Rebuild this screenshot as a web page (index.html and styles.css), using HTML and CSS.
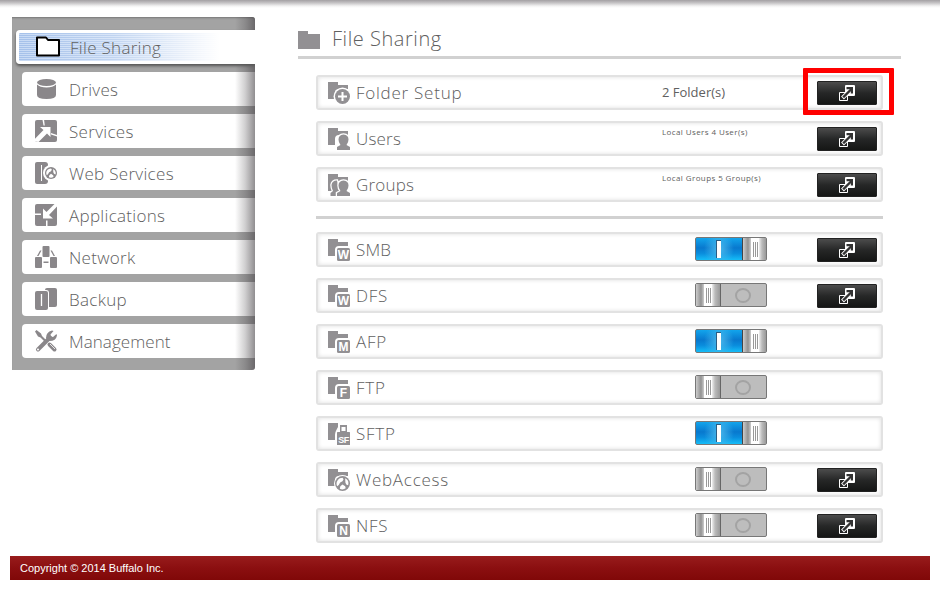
FILE: index.html
```html
<!DOCTYPE html>
<html lang="en">
<head>
    <meta charset="UTF-8">
    <title>File Sharing</title>
    <link rel="stylesheet" href="styles.css">
</head>
<body>
    <!-- shared icons -->
    <svg class="defs" width="0" height="0">
        <symbol id="folder-back" viewBox="0 0 22 22">
            <path d="M0 0h10v3h10v4h-9q-4 0-4 4v6H0z"/>
        </symbol>
        <symbol id="popup" viewBox="0 0 16 16">
            <path fill="#222" stroke="#fff" d="M.5 7.500h8v8h-8z"/>
            <rect x="6" width="10" height="11" rx="1" fill="#fff"/>
            <path fill="none" stroke="#fff" stroke-width="4" d="M3.500 13L9 7.500"/>
            <path fill="none" stroke="#333" stroke-width="2.400" d="M4.200 12.300L12.500 4"/>
            <path fill="#333" d="M7.500 2h6.500v6.500h-2.200V4.200H7.500z"/>
        </symbol>
        <symbol id="globe" viewBox="0 0 14 14">
            <circle cx="7" cy="7" r="7"/>
            <path fill="#fff" d="M4.500 2.200L7 1.700l1 1.300-1 2-2.200 1L3.500 8.500l-1.500 1a5.500 5.500 0 0 1 2.500-7.300zM9.500 2.200a5.500 5.500 0 0 1 2.700 6.500L10.500 8l-.8-2zM5 9.500l2-1.500 2.500 1.500.5 2a5.500 5.500 0 0 1-5.500.5z"/>
        </symbol>
    </svg>

    <div class="top-shadow"></div>
    <div class="container">
        <ul class="menu">
            <li class="active">
                <svg width="26" height="22" viewBox="0 0 26 22"><path fill="#fff" stroke="#000" stroke-width="2" stroke-linejoin="round" d="M2 1.500h9l2 2.500h11v15.500H2z"/></svg>
                <span>File Sharing</span>
            </li>
            <li>
                <svg width="22" height="22" viewBox="0 0 22 22"><ellipse cx="11.500" cy="4.500" rx="9.500" ry="3.500"/><path d="M2 6.500q3 3 9.500 3t9.500-3V17q0 4-9.500 4T2 17z"/></svg>
                <span>Drives</span>
            </li>
            <li>
                <svg width="22" height="22" viewBox="0 0 22 22"><rect width="22" height="22" rx="2"/><path fill="#fff" d="M5 7h10.500v10l-3.500-3.500L3.500 22 0 21.500v-2.700L8.500 10zM7.500 0h1.600l.7 5.500H8.500zM16 13l6 2v1.500L16 14.500z"/></svg>
                <span>Services</span>
            </li>
            <li>
                <svg width="22" height="22" viewBox="0 0 22 22"><path d="M2 0h8q3 0 3 3v16q0 3-3 3H2q-2 0-2-2V2q0-2 2-2z"/><path stroke="#fff" d="M6.500 3v16"/><circle cx="16" cy="11" r="8" fill="#fff"/><use href="#globe" x="10" y="5" width="12" height="12"/></svg>
                <span>Web Services</span>
            </li>
            <li>
                <svg width="22" height="22" viewBox="0 0 22 22"><rect width="22" height="22" rx="2"/><path fill="#fff" d="M8 4.500L11.500 8 19.500 0H22v2.500L14 11l4 3.500H8zM0 9.500h6V11H0zM11 16.500h1.500V22H11z"/></svg>
                <span>Applications</span>
            </li>
            <li>
                <svg width="22" height="22" viewBox="0 0 22 22"><rect x="7.500" width="7" height="11" rx="1"/><rect y="11" width="7" height="11" rx="1"/><rect x="15" y="11" width="7" height="11" rx="1"/><path d="M5 4.500h1.500L3.500 10H2zM15.500 4.500H17l3 5.500h-1.500zM8.500 15.500h5V17h-5z"/></svg>
                <span class="network">Network</span>
            </li>
            <li>
                <svg width="22" height="22" viewBox="0 0 22 22"><rect x="10" width="12" height="19" rx="2"/><rect x="-1" y="2" width="15" height="21" rx="3" fill="#fff"/><rect y="3" width="13" height="19" rx="2"/><path stroke="#fff" stroke-width="1.300" d="M6.500 6v12"/></svg>
                <span>Backup</span>
            </li>
            <li>
                <svg width="22" height="22" viewBox="0 0 22 22"><path d="M0 1.500L1.500 0 6 3.500l1 2.500 4 4-1.500 1.500-4-4-2.500-1z"/><path fill="none" stroke="#8a878a" stroke-width="4" stroke-linecap="round" d="M14.500 14.500l5 5M3 19.500L15 7.500"/><path d="M11 8q0-6 6-7.500l1.500.5-3 3.500.5 2 2 .5L21.500 4l.5 1.500Q21 11 14.500 11z"/><path stroke="#fff" stroke-width=".8" d="M15 14l5 5"/><circle cx="3" cy="19.500" r="1" fill="#fff"/></svg>
                <span class="management">Management</span>
            </li>
        </ul>

        <div class="content">
            <h1>
                <svg width="22" height="18" viewBox="0 0 22 18"><path d="M0 0h10v3h12v15H0z"/></svg>
                <span>File Sharing</span>
            </h1>

            <div class="row">
                <svg width="22" height="22"><use href="#folder-back"/><circle cx="14.500" cy="14.500" r="9" fill="#fff"/><circle cx="14.500" cy="14.500" r="7.500"/><path stroke="#fff" stroke-width="2" d="M10 14.500h9M14.500 10v9"/></svg>
                <span class="name wide">Folder Setup</span>
                <span class="info">2 Folder(s)</span>
                <button class="open marked"><svg width="16" height="16"><use href="#popup"/></svg></button>
            </div>
            <div class="row">
                <svg width="22" height="22"><use href="#folder-back"/><path stroke="#fff" stroke-width="2.500" paint-order="stroke" d="M9 22v-3l3.500-2q-2-2.500-2-5.500 0-4.500 5-5 5 .5 5 5 0 3-2 5.500L22 19v3z"/></svg>
                <span class="name">Users</span>
                <span class="info small">Local Users 4 User(s)</span>
                <button class="open"><svg width="16" height="16"><use href="#popup"/></svg></button>
            </div>
            <div class="row">
                <svg width="22" height="22"><use href="#folder-back"/><g stroke="#fff" stroke-width="2.500" paint-order="stroke"><path d="M2.500 22v-3L5 17q-1.500-3-1.500-6 .5-4.500 5.500-4.500l3 15.500z"/><path d="M9 22v-3l3.500-2q-2-2.500-2-5.500 0-4.500 5-5 5 .5 5 5 0 3-2 5.500L22 19v3z"/></g></svg>
                <span class="name">Groups</span>
                <span class="info small">Local Groups 5 Group(s)</span>
                <button class="open"><svg width="16" height="16"><use href="#popup"/></svg></button>
            </div>

            <hr>

            <div class="row">
                <svg width="22" height="22"><use href="#folder-back"/><rect x="9" y="9" width="13" height="13" rx="1.500"/><text x="15.500" y="19.800">W</text></svg>
                <span class="name">SMB</span>
                <span class="toggle on"></span>
                <button class="open"><svg width="16" height="16"><use href="#popup"/></svg></button>
            </div>
            <div class="row">
                <svg width="22" height="22"><use href="#folder-back"/><rect x="9" y="9" width="13" height="13" rx="1.500"/><text x="15.500" y="19.800">W</text></svg>
                <span class="name wide">DFS</span>
                <span class="toggle"></span>
                <button class="open"><svg width="16" height="16"><use href="#popup"/></svg></button>
            </div>
            <div class="row">
                <svg width="22" height="22"><use href="#folder-back"/><rect x="9" y="9" width="13" height="13" rx="1.500"/><text x="15.500" y="19.800">M</text></svg>
                <span class="name wide">AFP</span>
                <span class="toggle on"></span>
            </div>
            <div class="row">
                <svg width="22" height="22"><use href="#folder-back"/><rect x="9" y="9" width="13" height="13" rx="1.500"/><text x="15.500" y="19.800">F</text></svg>
                <span class="name wide">FTP</span>
                <span class="toggle"></span>
            </div>
            <div class="row">
                <svg width="22" height="22"><path d="M0 0h10v4q-3 5-3 8v5H0z"/><path fill-rule="evenodd" d="M12 2h7v7h2.500l.5.500V22H9V9.500l.5-.5H12zm1.500 2v4h4V4z"/><text class="sf" x="15.500" y="19.800">SF</text></svg>
                <span class="name wide">SFTP</span>
                <span class="toggle on"></span>
            </div>
            <div class="row">
                <svg width="22" height="22"><use href="#folder-back"/><circle cx="14.500" cy="14.500" r="8.500" fill="#fff"/><use href="#globe" x="7" y="7" width="15" height="15"/></svg>
                <span class="name wide">WebAccess</span>
                <span class="toggle"></span>
                <button class="open"><svg width="16" height="16"><use href="#popup"/></svg></button>
            </div>
            <div class="row">
                <svg width="22" height="22"><use href="#folder-back"/><rect x="9" y="9" width="13" height="13" rx="1.500"/><text x="15.500" y="19.800">N</text></svg>
                <span class="name wide">NFS</span>
                <span class="toggle"></span>
                <button class="open"><svg width="16" height="16"><use href="#popup"/></svg></button>
            </div>
        </div>
    </div>

    <div class="footer">Copyright © 2014 Buffalo Inc.</div>
</body>
</html>
```
FILE: styles.css
```css
*, *::before, *::after {
    box-sizing: border-box;
}
body {
    margin: 0;
    height: 596px;
    overflow: hidden;
    background: #fff;
    color: #606060;
    font-family: "Open Sans", "Noto Sans", sans-serif;
    font-weight: 300;
}
svg {
    fill: #929093;
    flex: none;
    overflow: visible;
}
.defs {
    display: block;
    height: 0;
}
.top-shadow {
    height: 8px;
    background: linear-gradient(#a3a0a3, #c4c2c4 35%, #f2f2f2 75%, #fff);
}
.container {
    display: flex;
    align-items: flex-start;
    height: 548px;
    padding: 9px 0 0 12px;
}

/* left menu */
.menu {
    position: relative;
    width: 243px;
    height: 353px;
    margin: 0;
    padding: 13px 0 0 10px;
    list-style: none;
    background: #a3a3a3;
    border-radius: 0 3px 3px 0;
    box-shadow: inset 0 2px 2px -1px #777;
    overflow: hidden;
}
.menu li {
    display: flex;
    align-items: center;
    height: 34px;
    margin-bottom: 8px;
    padding-left: 13px;
    background: #fff;
    border-radius: 4px 0 0 4px;
    font-size: 17px;
    letter-spacing: 0.3px;
}
.menu li svg {
    margin-right: 12px;
    fill: #8a878a;
}
.menu .management {
    letter-spacing: 0.05px;
}
/* fade on the right edge */
.menu::after {
    content: "";
    position: absolute;
    top: 0;
    right: 0;
    width: 20px;
    height: 100%;
    background: linear-gradient(to right, rgba(70, 66, 70, 0), rgba(70, 66, 70, 0.25) 50%, rgba(70, 66, 70, 0.6));
}
.menu .active {
    position: relative;
    z-index: 1;
    margin-left: -6px;
    padding-left: 16px;
    border: 3px solid #fff;
    border-right: 0;
    background: linear-gradient(to right, rgba(255, 255, 255, 0), rgba(255, 255, 255, 0.3) 40%, #fff 85%), repeating-linear-gradient(#a5c1ea 0 1px, #c9dbf5 1px 2px);
    box-shadow: 0 2px 3px #555;
}
.menu .active svg {
    margin-right: 9px;
}

/* right side */
.content {
    width: 603px;
    margin-left: 43px;
    padding-top: 8px;
}
h1 {
    display: flex;
    align-items: center;
    height: 34px;
    margin: 0 0 16px;
    padding-bottom: 4px;
    border-bottom: 3px solid #d1d1d1;
    font-size: 20px;
    font-weight: 300;
    letter-spacing: 0.55px;
}
h1 svg {
    margin-top: 3px;
    margin-right: 12px;
}
.row {
    display: flex;
    align-items: center;
    width: 567px;
    height: 35px;
    margin: 0 0 11px 18px;
    padding-left: 10px;
    border: 2px solid #e2e2e2;
    border-radius: 3px;
    box-shadow: inset 0 0 4px #ddd;
}
.row text {
    fill: #fff;
    font: bold 12px "Liberation Sans", sans-serif;
    text-anchor: middle;
}
.row .sf {
    font-size: 9px;
    letter-spacing: -0.5px;
}
.name {
    width: 306px;
    margin-left: 6px;
    font-size: 17px;
    letter-spacing: 0.2px;
    white-space: nowrap;
}
.wide {
    letter-spacing: 0.75px;
}
.info {
    width: 155px;
    padding-bottom: 1px;
    font-size: 13px;
    font-weight: 400;
    white-space: nowrap;
}
.small {
    padding-bottom: 14px;
    font-size: 8px;
    letter-spacing: 0.4px;
}
.toggle {
    position: relative;
    width: 72px;
    height: 24px;
    margin: -1px 50px 0 33px;
    border: 1px solid #777;
    border-radius: 2px;
    background: #bdbdbd;
}
.toggle::before {
    content: "";
    position: absolute;
    top: 4px;
    left: 39px;
    width: 16px;
    height: 15px;
    border: 2px solid #a3a3a3;
    border-radius: 50%;
}
.toggle::after {
    content: "";
    position: absolute;
    top: 0;
    left: 0;
    width: 25px;
    height: 22px;
    border-right: 1px solid #666;
    background:
        repeating-linear-gradient(to right, #999 0 1px, transparent 1px 2px) 10px 4px / 5px 15px no-repeat,
        linear-gradient(#fff, #fff) 8px 0 / 8px 22px no-repeat,
        linear-gradient(to right, #ccc, #929292 5px, #ccc 8px, #eee 16px, #bbb 19px, #999);
}
.toggle.on {
    background: radial-gradient(ellipse 15px 18px at 23px 50%, #4ab8ec, transparent), linear-gradient(#12a5ec, #0878ce 45%, #0a8ddd 70%, #15bdf8);
}
.toggle.on::before {
    top: 2px;
    left: 20px;
    width: 5px;
    height: 18px;
    border: 1px solid #2b5d83;
    border-width: 1px 0 0 1px;
    border-radius: 0;
    background: #fff;
}
.toggle.on::after {
    left: 46px;
    width: 24px;
    border-right: 0;
    border-left: 1px solid #444;
}
.open {
    position: relative;
    display: flex;
    align-items: center;
    justify-content: center;
    width: 60px;
    height: 24px;
    padding: 0;
    border: 1px solid #222;
    border-radius: 1px;
    background: linear-gradient(#4c4c4c, #262727 50%, #151615);
}
.marked::after {
    content: "";
    position: absolute;
    top: -14px;
    left: -15px;
    width: 91px;
    height: 47px;
    border: 5px solid #f00;
    border-radius: 1px;
}
hr {
    width: 567px;
    height: 3px;
    margin: 14px 0 13px 18px;
    border: 0;
    background: #d1d1d1;
}

.footer {
    width: 920px;
    height: 24px;
    margin-left: 10px;
    padding-left: 10px;
    background: linear-gradient(#981c1c, #8b0f10 50%, #800808);
    color: #fff;
    font: 11px/24px "Liberation Sans", Arial, sans-serif;
}
```
